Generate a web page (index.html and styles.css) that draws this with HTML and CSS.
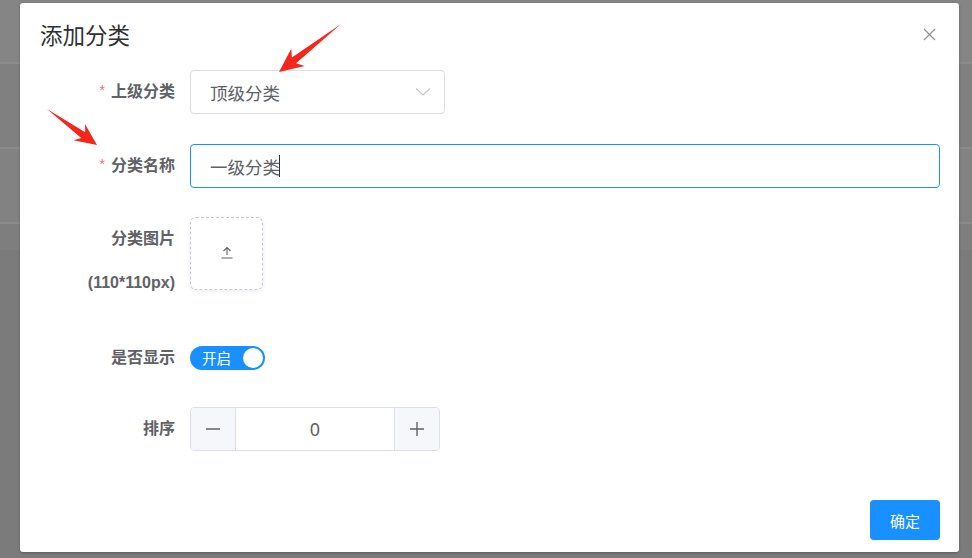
FILE: index.html
```html
<!DOCTYPE html>
<html lang="zh-CN">
<head>
<meta charset="utf-8">
<title>添加分类</title>
<link rel="stylesheet" href="styles.css">
</head>
<body>
<div class="page">
  <div class="dialog">
    <div class="dlg-head">
      <span class="dlg-title">添加分类</span>
      <span class="close" aria-label="关闭">
        <svg width="13" height="13" viewBox="0 0 13 13"><path d="M1 1 L12 12 M12 1 L1 12" stroke="#909399" stroke-width="1.3" fill="none"/></svg>
      </span>
    </div>
    <div class="dlg-body">
      <div class="item gap30">
        <label class="lbl req">上级分类</label>
        <div class="select">
          <span class="val">顶级分类</span>
          <svg width="16" height="10" viewBox="0 0 16 10"><path d="M1 1.5 L8 8 L15 1.5" stroke="#c0c4cc" stroke-width="1.2" fill="none"/></svg>
        </div>
      </div>
      <div class="item gap29">
        <label class="lbl req">分类名称</label>
        <div class="input focus"><span class="val">一级分类</span><span class="caret"></span></div>
      </div>
      <div class="item gap31">
        <label class="lbl">分类图片<br>(110*110px)</label>
        <div class="upload">
          <svg width="14" height="14" viewBox="0 0 14 14"><path d="M7 1.5 V9 M3.5 5 L7 1.5 L10.5 5 M1.5 12 H12.5" stroke="#606266" stroke-width="1.1" fill="none"/></svg>
        </div>
      </div>
      <div class="item gap27">
        <label class="lbl">是否显示</label>
        <div class="switch"><span class="sw-text">开启</span><span class="knob"></span></div>
      </div>
      <div class="item">
        <label class="lbl">排序</label>
        <div class="number">
          <span class="nbtn"><svg width="16" height="16" viewBox="0 0 16 16"><path d="M1 8 H15" stroke="#606266" stroke-width="1.4"/></svg></span>
          <span class="nval">0</span>
          <span class="nbtn"><svg width="16" height="16" viewBox="0 0 16 16"><path d="M1 8 H15 M8 1 V15" stroke="#606266" stroke-width="1.4"/></svg></span>
        </div>
      </div>
    </div>
    <div class="dlg-foot">
      <button class="btn">确定</button>
    </div>
  </div>
  <svg class="marks" width="972" height="558" viewBox="0 0 972 558">
    <polygon points="341,24 296.1,63.2 304.7,66 279,72 291.3,48.6 291.9,57.6" fill="#f5261c"/>
    <polygon points="47,109 81.2,137.9 73.4,140.3 97,145 85,124.1 85.2,132.3" fill="#f5261c"/>
  </svg>
</div>
</body>
</html>
```

FILE: styles.css
```css
html, body {
  margin: 0;
  padding: 0;
}

body {
  width: 972px;
  height: 558px;
  overflow: hidden;
  font-family: "Liberation Sans", "Noto Sans CJK SC", sans-serif;
  background:
    linear-gradient(to bottom,
      #858585 0, #858585 62px, #8c8c8c 62px, #8c8c8c 64px,
      #808080 64px, #808080 147px, #8a8a8a 147px, #8a8a8a 149px,
      #828282 149px, #828282 222px, #8b8b8b 222px, #8b8b8b 224px,
      #7e7e7e 224px, #7e7e7e 250px, #7b7b7b 250px);
}

.page {
  position: relative;
  width: 972px;
  height: 558px;
}

.dialog {
  position: absolute;
  left: 20px;
  top: 3px;
  width: 939px;
  height: 549px;
  box-sizing: border-box;
  background: #fff;
  border-radius: 3px;
  box-shadow: 0 1px 3px rgba(0, 0, 0, 0.25);
  display: flex;
  flex-direction: column;
}

.dlg-head {
  display: flex;
  justify-content: space-between;
  align-items: center;
  padding: 16px 23px 0 20px;
  height: 30px;
}

.dlg-title {
  font-size: 22.5px;
  line-height: 30px;
  color: #303133;
  font-family: "Noto Sans CJK SC", sans-serif;
}

.close {
  display: flex;
  width: 13px;
  height: 13px;
}

.dlg-body {
  padding-top: 21px;
  flex: 1;
}

.item {
  display: flex;
  align-items: flex-start;
}

.gap30 { margin-bottom: 30px; }
.gap29 { margin-bottom: 29px; }
.gap31 { margin-bottom: 31px; }
.gap27 { margin-bottom: 27px; }

.lbl {
  width: 170px;
  flex-shrink: 0;
  box-sizing: border-box;
  padding-right: 15px;
  text-align: right;
  font-size: 16px;
  font-weight: bold;
  line-height: 44px;
  color: #606266;
}

.req::before {
  content: "*";
  color: #f56c6c;
  font-weight: normal;
  font-size: 14px;
  margin-right: 6px;
  position: relative;
  top: -2px;
}

.select,
.input {
  box-sizing: border-box;
  height: 44px;
  border: 1px solid #dcdfe6;
  border-radius: 4px;
  display: flex;
  align-items: center;
  padding: 0 13px 0 19px;
  color: #606266;
  font-family: "Noto Sans CJK SC", sans-serif;
  font-size: 17.5px;
}

.select {
  width: 255px;
  justify-content: space-between;
}

.input {
  width: 750px;
}

.input.focus {
  border-color: #1890ff;
}

.caret {
  width: 1px;
  height: 22px;
  background: #303133;
  margin-left: -1px;
}

.upload {
  box-sizing: border-box;
  width: 73px;
  height: 73px;
  border: 1px dashed #c0ccda;
  border-radius: 6px;
  box-shadow: 0 1px 4px rgba(0, 0, 0, 0.08);
  display: flex;
  align-items: center;
  justify-content: center;
  padding-bottom: 1px;
}

.switch {
  margin-top: 10px;
  box-sizing: border-box;
  width: 75px;
  height: 24px;
  border-radius: 12px;
  background: #1890ff;
  display: flex;
  align-items: center;
  justify-content: space-between;
  padding: 0 2px 0 12px;
}

.sw-text {
  color: #fff;
  font-family: "Noto Sans CJK SC", sans-serif;
  font-size: 14.5px;
  line-height: 20px;
}

.knob {
  width: 20px;
  height: 20px;
  border-radius: 50%;
  background: #fff;
}

.number {
  box-sizing: border-box;
  width: 250px;
  height: 44px;
  border: 1px solid #dcdfe6;
  border-radius: 4px;
  display: flex;
  overflow: hidden;
}

.nbtn {
  width: 44px;
  background: #f5f7fa;
  display: flex;
  align-items: center;
  justify-content: center;
}

.nbtn:first-child {
  border-right: 1px solid #dcdfe6;
}

.nbtn:last-child {
  border-left: 1px solid #dcdfe6;
}

.nval {
  flex: 1;
  text-align: center;
  line-height: 42px;
  font-size: 18px;
  color: #606266;
  font-family: "Noto Sans", sans-serif;
}

.dlg-foot {
  display: flex;
  justify-content: flex-end;
  padding: 0 19px 12px 0;
}

.btn {
  width: 70px;
  height: 40px;
  border: none;
  border-radius: 4px;
  background: #1890ff;
  color: #fff;
  font-family: "Noto Sans CJK SC", sans-serif;
  font-size: 15px;
  padding: 0;
}

.marks {
  position: absolute;
  left: 0;
  top: 0;
  pointer-events: none;
}
```
